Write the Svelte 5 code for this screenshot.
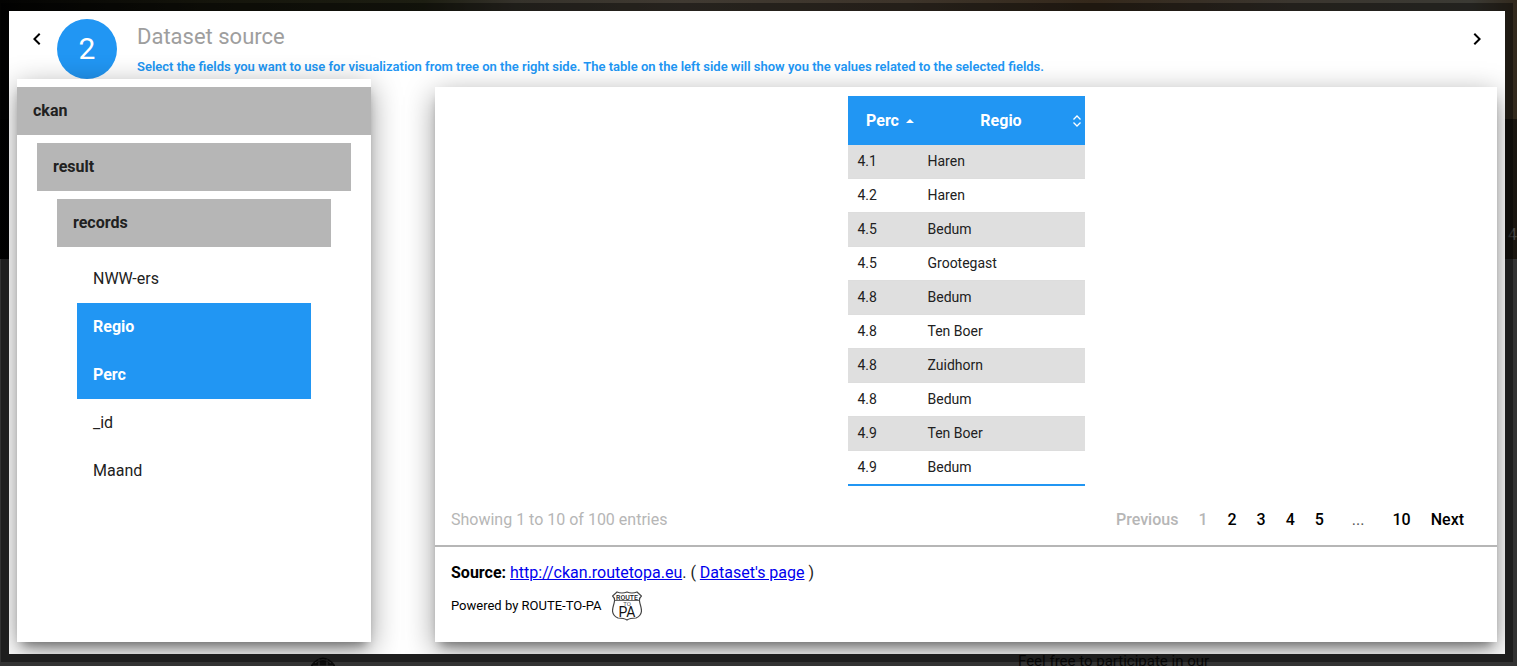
<script>
  const fields = [
    { name: 'NWW-ers', selected: false },
    { name: 'Regio', selected: true },
    { name: 'Perc', selected: true },
    { name: '_id', selected: false },
    { name: 'Maand', selected: false }
  ];
  const rows = [
    ['4.1', 'Haren'],
    ['4.2', 'Haren'],
    ['4.5', 'Bedum'],
    ['4.5', 'Grootegast'],
    ['4.8', 'Bedum'],
    ['4.8', 'Ten Boer'],
    ['4.8', 'Zuidhorn'],
    ['4.8', 'Bedum'],
    ['4.9', 'Ten Boer'],
    ['4.9', 'Bedum']
  ];
  const pages = ['2', '3', '4', '5'];
</script>

<div class="page">
  <div class="backdrop">
    <div class="photo"><span class="count">4</span></div>
    <div class="below">
      <svg class="emblem" viewBox="0 0 26 14" aria-hidden="true">
        <path d="M1 9 Q13 -6 25 9 V14 H1Z" fill="#0b0b0b" />
        <path d="M5 7 Q13 0 21 7 M3 10H23 M9 3V12 M17 3V12" stroke="#333" fill="none" />
      </svg>
      <span class="invite">Feel free to participate in our</span>
    </div>
  </div>

  <main class="dialog">
    <header>
      <button class="arrow" aria-label="Back">
        <svg viewBox="0 0 24 24"><path d="M15.41 7.41 14 6l-6 6 6 6 1.41-1.41L10.83 12z" /></svg>
      </button>
      <div class="step">2</div>
      <div class="heading">
        <h1>Dataset source</h1>
        <p>Select the fields you want to use for visualization from tree on the right side. The table on the left side will show you the values related to the selected fields.</p>
      </div>
      <button class="arrow" aria-label="Forward">
        <svg viewBox="0 0 24 24"><path d="M10 6 8.590 7.410 13.170 12l-4.580 4.590L10 18l6-6z" /></svg>
      </button>
    </header>

    <div class="columns">
      <section class="tree">
        <button class="node">ckan</button>
        <div class="branch">
          <button class="node">result</button>
          <div class="branch">
            <button class="node">records</button>
            <div class="branch">
              {#each fields as field}
                <button class="leaf" class:selected={field.selected} aria-pressed={field.selected}>{field.name}</button>
              {/each}
            </div>
          </div>
        </div>
      </section>

      <section class="preview">
        <table>
          <thead>
            <tr>
              <th class="perc">
                <div class="label">
                  <span>Perc</span>
                  <svg width="8" height="4" viewBox="0 0 8 4"><path d="M0 4 4 0 8 4Z" fill="#fff" /></svg>
                </div>
              </th>
              <th class="regio">
                <div class="label">
                  <span>Regio</span>
                  <svg width="8" height="12" viewBox="0 0 8 12"><path d="M.5 4.500 4 1 7.500 4.500M.5 7.500 4 11 7.500 7.500" fill="none" stroke="#fff" stroke-width="1.300" /></svg>
                </div>
              </th>
            </tr>
          </thead>
          <tbody>
            {#each rows as [perc, regio]}
              <tr><td>{perc}</td><td>{regio}</td></tr>
            {/each}
          </tbody>
        </table>

        <div class="paging">
          <span class="info">Showing 1 to 10 of 100 entries</span>
          <nav aria-label="Pages">
            <button class="off" disabled>Previous</button>
            <button class="off" disabled>1</button>
            {#each pages as page}<button>{page}</button>{/each}
            <span class="dots">...</span>
            <button>10</button>
            <button>Next</button>
          </nav>
        </div>

        <footer>
          <p class="source"><b>Source:</b> <a href="http://ckan.routetopa.eu">http://ckan.routetopa.eu</a>. ( <a href="#dataset">Dataset's page</a> )</p>
          <div class="powered">
            <span>Powered by ROUTE-TO-PA</span>
            <svg width="30" height="30" viewBox="0 0 30 30" role="img" aria-label="ROUTE TO PA">
              <path d="M5 1Q10 3 15 1Q20 3 25 1L29.500 5Q27 7 27.500 10C28 14 29.500 16 29.500 20Q29 25 24 27Q18 27 15 29Q12 27 6 27Q1 25 .5 20C.5 16 2 14 2.500 10Q3 7 .5 5Z" fill="#fff" stroke="#444" stroke-width="1.200" />
              <path d="M3 9.500H27" stroke="#666" />
              <text x="15" y="8.500" font-size="7" font-weight="500" fill="#222">ROUTE</text>
              <text x="15" y="15" font-size="6" fill="#555">TO</text>
              <text x="15" y="26" font-size="14" fill="#111">PA</text>
            </svg>
          </div>
        </footer>
      </section>
    </div>
  </main>
</div>

<style>
  :global(body) { margin: 0; background: #333; }
  .page {
    position: relative;
    display: flex;
    box-sizing: border-box;
    min-height: 100vh;
    padding: 3px 4px 4px 1px;
    overflow: hidden;
    font: 16px/24px Roboto, sans-serif;
    color: #212121;
  }
  button { font: inherit; color: inherit; border: 0; background: none; padding: 0; cursor: pointer; }
  h1, p { margin: 0; }

  .backdrop { position: absolute; inset: 0; display: flex; flex-direction: column; background: #333; }
  .photo {
    display: flex;
    align-items: flex-end;
    justify-content: flex-end;
    height: 259px;
    box-sizing: border-box;
    padding-bottom: 12px;
    color: #444;
    background:
      linear-gradient(to bottom, transparent 119px, rgba(0, 0, 0, .5) 119px),
      linear-gradient(to right, #030302 0, #15150c 14%, #1d1e12 28%, #35322b 34%, #403a32 45%, #3d342a 60%, #34281b 72%, #3b362f 85%, #3b3a34 97%, #32291d 100%);
  }
  .below { flex: 1; display: flex; align-items: flex-end; padding-left: 310px; height: 0; }
  .emblem { width: 26px; height: 14px; margin-bottom: -4px; }
  .invite { margin: 0 0 -7px 682px; color: #080808; font-size: 15px; }

  .dialog {
    position: relative;
    flex: 1;
    min-width: 0;
    display: flex;
    flex-direction: column;
    border: 8px solid rgba(0, 0, 0, .4);
    background: #fff padding-box;
  }
  header { display: flex; align-items: flex-start; padding: 8px 8px 0; }
  .arrow { width: 40px; height: 40px; flex: none; display: grid; place-items: center; }
  .arrow svg { width: 24px; height: 24px; fill: #000; }
  .step {
    width: 60px; height: 60px; line-height: 60px;
    flex: none;
    border-radius: 50%;
    background: #2196f3;
    color: #fff;
    font-size: 30px;
    text-align: center;
  }
  .heading { flex: 1; min-width: 0; padding-left: 20px; }
  h1 { font-size: 22px; line-height: 36px; font-weight: 400; color: #9e9e9e; }
  .heading p { font-size: 13px; line-height: 24px; font-weight: 600; color: #2196f3; }

  .columns {
    flex: 1;
    display: grid;
    grid-template-columns: minmax(0, 1fr) minmax(0, 3fr);
    gap: 64px;
    margin-top: -24px;
    padding: 24px 8px 12px;
    overflow: hidden;
  }
  .tree, .preview {
    background: #fff;
    box-shadow: 0 8px 10px -5px rgba(0, 0, 0, .4), 0 8px 28px rgba(0, 0, 0, .4);
  }
  .tree { display: flex; flex-direction: column; padding-top: 8px; }
  .node, .leaf { height: 48px; padding: 0 16px; text-align: left; }
  .node { background: #b6b6b6; font-weight: 700; margin-bottom: 8px; }
  .branch { display: flex; flex-direction: column; padding: 0 20px; }
  .selected { background: #2196f3; color: #fff; font-weight: 700; }

  .preview { margin-top: 8px; display: flex; flex-direction: column; padding-top: 9px; }
  table {
    width: 237px;
    margin: 0 auto;
    border-collapse: separate;
    border-spacing: 0;
    border-bottom: 2px solid #2196f3;
    font-size: 14px;
    line-height: 17px;
  }
  th { height: 49px; padding: 0; background: #2196f3; color: #fff; font-size: 16px; }
  .perc { width: 70px; }
  .label { display: flex; align-items: center; }
  .label span { flex: 1; }
  .perc .label { padding: 0 4px 0 12px; }
  .regio .label { padding: 0 4px 0 12px; }
  td { padding: 8px 10px; border-top: 1px solid #ddd; }
  tbody tr:first-child td { border-top: 0; }
  tbody tr:nth-child(odd) { background: #dfdfdf; }

  .paging {
    display: flex;
    align-items: center;
    justify-content: space-between;
    height: 50px;
    padding: 9px 23px 0 16px;
    border-bottom: 2px solid #b6b6b6;
  }
  .info { color: #b6b6b6; }
  nav { display: flex; align-items: center; font-weight: 500; color: #000; }
  nav button { padding: 0 10px; }
  nav .off { color: #b6b6b6; }
  .dots { padding: 0 18px; font-weight: 400; color: #555; }

  footer { padding: 14px 16px 20px; }
  .source b { color: #000; font-weight: 700; }
  a { color: #00e; }
  .powered { display: flex; align-items: center; gap: 10px; margin-top: 6px; font-size: 13px; color: #000; }
  .powered text { text-anchor: middle; font-family: Roboto, sans-serif; }
</style>
